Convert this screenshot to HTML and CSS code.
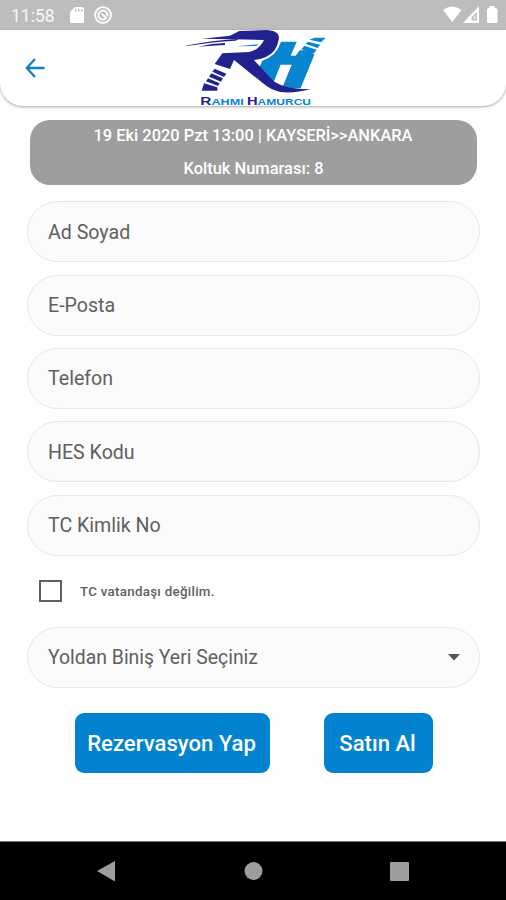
FILE: index.html
```html
<!DOCTYPE html>
<html lang="tr">
<head>
<meta charset="utf-8">
<title>Rahmi Hamurcu</title>
<link rel="stylesheet" href="styles.css">
</head>
<body>
<div class="status">
  <span class="clock">11:58</span>
  <svg class="sd" width="14" height="16" viewBox="0 0 14 16"><path fill="#fff" fill-rule="evenodd" d="M5 0h7.500Q14 0 14 1.500V14.500Q14 16 12.500 16H1.500Q0 16 0 14.500V5zM5 2v2.500h1.500V2zm3 0v2.500h1.500V2zm3 0v2.500h1.500V2z"/></svg>
  <svg class="ring" width="18" height="18" viewBox="0 0 18 18" fill="none" stroke="#fff"><circle cx="9" cy="9" r="7.900" stroke-width="1.900"/><path stroke-width="1.900" d="M11.500 12.800A4.500 4.500 0 1 1 13.200 10.500M7.500 7.500L12.500 12.500"/></svg>
  <svg class="signals" width="56" height="18" viewBox="0 0 56 18"><path fill="#fff" d="M0 4Q9 -3 18.500 4L9.300 16zM36 0V17H20z"/><path fill="#bdbdbd" d="M34 6V14.500H28.500V11z"/><path fill="#fff" fill-opacity=".45" d="M33 9V13.500H30V11z"/><path fill="#fff" d="M46.500 1.500V0h5v1.500L54.500 3V15.500Q54.500 17 53 17H45.500Q44 17 44 15.500V3z"/></svg>
</div>
<header class="header">
  <svg class="back" width="20" height="20" viewBox="0 0 20 20" fill="none" stroke="#1480bd" stroke-width="2.300"><path d="M10 1L1.800 10l8.200 9M1.500 10H19.500"/></svg>
  <svg class="logo" width="150" height="77" viewBox="0 14 450 231">
    <g fill="#0785d0">
      <path d="M303 49H350L332 91H347L359 75H391L403 88L362 188Q342 190 308 184L335 118H302L280 172Q250 159 230 143L247 106Q290 91 303 49Z"/>
      <path d="M404 37H437L423 51L388 43ZM384 49L421 58L413 68L377 56ZM373 61L410 73L402 84L364 72Z"/>
      <path d="M168 63L235 57L229 62Z"/>
    </g>
    <g fill="#22228f">
      <path d="M66 40L150 31L178 17L258 14Q302 16 296 43Q290 81 256 96Q242 103 222 104L276 163Q309 192 391 191Q344 205 301 200Q270 193 249 174L162 104L150 131L104 116L127 84L208 80Q238 73 252 44L160 42Z"/>
      <path d="M13 63Q70 48 176 41L167 46Q95 50 13 63ZM55 64Q95 53 135 53V59Q95 61 55 64Z"/>
      <path d="M104 130L139 145L132 155L97 139ZM94 144L129 159L123 169L87 154ZM84 159L119 174L114 182L78 168ZM72 174L112 186V196H65Z"/>
    </g>
    <g class="brand" fill="#0785d0"><text x="61" y="239" textLength="130" lengthAdjust="spacingAndGlyphs"><tspan class="cap">R</tspan>AHMI</text><text x="201" y="239" textLength="192" lengthAdjust="spacingAndGlyphs"><tspan class="cap">H</tspan>AMURCU</text></g>
  </svg>
</header>
<main class="content">
  <div class="trip"><svg width="446" height="65" viewBox="0 0 446 65"><text x="63.500" y="21" textLength="319" lengthAdjust="spacingAndGlyphs">19 Eki 2020 Pzt 13:00 | KAYSERİ&gt;&gt;ANKARA</text><text x="153.500" y="53.500" textLength="140" lengthAdjust="spacingAndGlyphs">Koltuk Numarası: 8</text></svg></div>
  <div class="fields">
    <div class="field"><span>Ad Soyad</span></div>
    <div class="field"><span>E-Posta</span></div>
    <div class="field"><span>Telefon</span></div>
    <div class="field"><span>HES Kodu</span></div>
    <div class="field"><span>TC Kimlik No</span></div>
  </div>
  <label class="check"><span class="box"></span><span>TC vatandaşı değilim.</span></label>
  <div class="field select"><span>Yoldan Biniş Yeri Seçiniz</span><svg width="12" height="7" viewBox="0 0 12 7"><path fill="#555" d="M0 0h12L6 6.500z"/></svg></div>
  <div class="actions"><div class="btn reserve">Rezervasyon Yap</div><div class="btn buy">Satın Al</div></div>
</main>
<nav class="nav">
  <svg width="506" height="58" viewBox="0 0 506 58" fill="#9e9e9e"><path d="M97 29L115 19V39.500z"/><circle cx="253.500" cy="29" r="9"/><rect x="390" y="20" width="19" height="19" rx="1"/></svg>
</nav>
</body>
</html>
```
FILE: styles.css
```css
* { box-sizing: border-box; }
body {
  margin: 0;
  width: 506px;
  height: 900px;
  display: flex;
  flex-direction: column;
  overflow: hidden;
  background: #fefefe;
  font-family: Roboto, sans-serif;
  color: #606060;
}
svg { display: block; flex: none; }
.status {
  height: 30px;
  flex: none;
  display: flex;
  align-items: center;
  background: #bdbdbd;
  padding: 0 8px 0 11px;
}
.clock { width: 59px; font-size: 17.5px; color: #fff; opacity: .9; padding-top: 2px; }
.ring { margin-left: 10px; }
.signals { margin-left: auto; margin-right: -1px; }
.header {
  height: 76px;
  flex: none;
  display: flex;
  align-items: center;
  padding-left: 25px;
  background: #fff;
  border-radius: 0 0 23px 23px;
  box-shadow: 0 1px 3px rgba(0, 0, 0, .35);
}
.logo { margin-left: 135px; overflow: visible; }
.brand { font: bold 27px "Liberation Sans", sans-serif; }
.cap { font-size: 33px; fill: #22228f; }
.content { flex: 1; padding: 14px 26px 0 27px; }
.trip {
  height: 65px;
  margin: 0 3px 16.400px;
  border-radius: 20px;
  background: #9e9e9e;
  overflow: hidden;
  font-size: 16px;
  font-weight: 500;
}
.trip text { fill: #fff; }
.fields { display: flex; flex-direction: column; gap: 12.300px; }
.field {
  height: 61px;
  display: flex;
  align-items: center;
  padding: 1px 19px 0 20px;
  border: 1px solid #e6e6e6;
  border-radius: 31px;
  background: #fbfbfb;
  font-size: 19.600px;
}
.check {
  display: flex;
  align-items: center;
  height: 71px;
  padding-left: 12px;
  gap: 18px;
  font-size: 13.300px;
  font-weight: 500;
  letter-spacing: .3px;
}
.box { width: 23px; height: 22px; border: 2px solid #606060; }
.select { justify-content: space-between; font-size: 19.400px; }
.actions { display: flex; gap: 54px; padding: 25.500px 0 0 48px; }
.btn {
  height: 60px;
  display: flex;
  align-items: center;
  justify-content: center;
  padding-right: 2px;
  border-radius: 9px;
  background: #0383cf;
  color: #fff;
  font-size: 22.100px;
  font-weight: 500;
  white-space: nowrap;
}
.reserve { width: 195px; }
.buy { width: 109px; }
.nav { height: 59px; flex: none; background: #000; border-top: 1px solid #777; }
```
